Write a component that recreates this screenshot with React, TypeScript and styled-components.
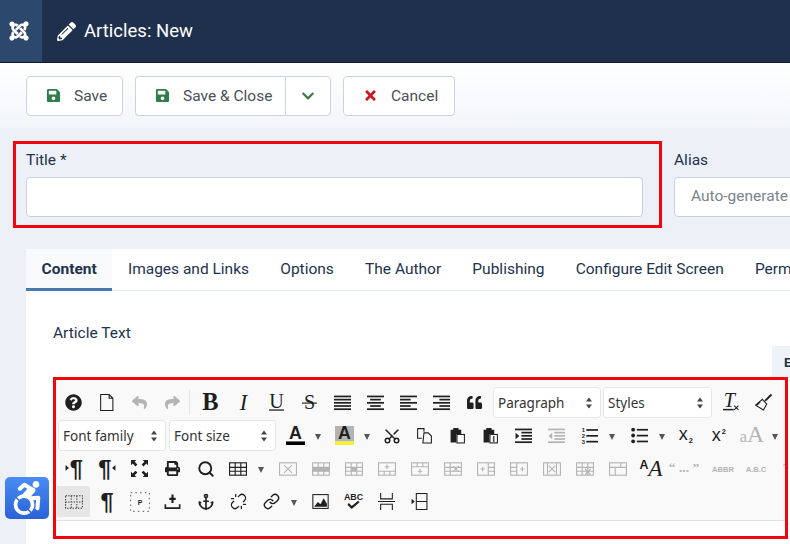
import React from 'react';
import styled, { createGlobalStyle } from 'styled-components';
import {
  FaJoomla, FaPencilAlt, FaSave, FaTimes, FaChevronDown, FaAccessibleIcon, FaQuestionCircle,
  FaReply, FaShare, FaQuoteLeft, FaPrint,
} from 'react-icons/fa';
import { Scissors, Search, Anchor, Link, Unlink } from 'lucide-react';

const Global = createGlobalStyle`
  html, body { margin: 0; padding: 0; background: #edf1f7; }
  * { box-sizing: border-box; }
  #root { width: 790px; height: 544px; overflow: hidden; position: relative; font-family: Roboto, "Liberation Sans", sans-serif; }
`;

const Page = styled.div`width: 790px; height: 544px; overflow: hidden; position: relative; background: #edf1f7;`;
const Header = styled.header`
  height: 63px; display: flex; align-items: stretch; background: #1f304c; border-bottom: 1px solid #0f1a2c;
`;
const LogoCell = styled.div`
  width: 42px; padding-right: 5px; background: #2c486c; display: flex; align-items: center; justify-content: center; color: #fff; font-size: 22px;
`;
const PageTitle = styled.h1`
  margin: 0 0 0 15px; display: flex; align-items: center; gap: 8px; color: #fff; font-size: 18.5px; font-weight: 400;
  svg { font-size: 19px; }
`;
const ActionBar = styled.div`
  height: 65px; padding: 13px 26px 12px; display: flex; gap: 12px;
  background: linear-gradient(#ffffff, #f2f5fa);
`;
const ActionButton = styled.button<{ $w: number }>`
  width: ${p => p.$w}px; height: 40px; padding: 0 0 1px; background: #fff; border: 1px solid #ccd3de; border-radius: 4px;
  display: flex; align-items: center; font: 400 15.5px Roboto, sans-serif; color: #495057;
`;
const ButtonIcon = styled.span<{ $color: string; $w: number }>`
  width: ${p => p.$w}px; padding-left: 19px; display: flex; color: ${p => p.$color}; font-size: 15px;
`;
const SplitGroup = styled.div`display: flex;`;
const MainPart = styled(ActionButton)`border-radius: 4px 0 0 4px; border-right: 0;`;
const CaretPart = styled(ActionButton)`
  border-radius: 0 4px 4px 0; justify-content: center; color: #3f7a4e; font-size: 14px;
`;
const Form = styled.main`padding: 13px 0 0 13px;`;
const FieldRow = styled.div`display: flex; align-items: flex-start; width: 1100px;`;
const TitleBox = styled.div`
  width: 649px; height: 87px; border: 3px solid #f0060c; padding: 7px 16px 8px 10px;
`;
const AliasBox = styled.div`width: 400px; margin-left: 12px; padding-top: 10px;`;
const FieldLabel = styled.label`
  display: block; height: 24px; margin-bottom: 2px; font-size: 15.5px; line-height: 19px; color: #22324e;
`;
const TextInput = styled.div`
  height: 40px; background: #fff; border: 1px solid #c5d0e2; border-radius: 4px; padding: 0 16px;
  font-size: 15.5px; line-height: 37px; color: #7b838b; white-space: nowrap;
`;
const Card = styled.section`margin: 21px 0 0 13px; width: 900px; background: #fff; height: 300px;`;
const Tabs = styled.nav`display: flex; height: 42px; border-bottom: 1px solid #e3e9f2;`;
const Tab = styled.div<{ $active?: boolean }>`
  padding: 0 15.6px; height: 42px; line-height: 41px; font-size: 15.5px; white-space: nowrap; color: #22324e;
  font-weight: ${p => (p.$active ? 700 : 400)};
  background: ${p => (p.$active ? '#f8fafc' : 'transparent')};
  border-bottom: ${p => (p.$active ? '3px solid #4a79af' : '0')};
`;
const EditorArea = styled.div`padding: 30px 0 0 27px;`;
const ArticleLabel = styled.div`height: 25px; font-size: 15.5px; line-height: 24px; color: #22324e;`;
const ToggleRow = styled.div`height: 31px; padding-left: 719px;`;
const ToggleTab = styled.div`
  width: 90px; height: 31px; background: #eef3f9; padding-left: 12px; font-size: 13px; font-weight: 700; line-height: 34px; color: #22324e;
`;
const Editor = styled.div`
  width: 735px; height: 162px; border: 3px solid #f0060c; background: #fff; overflow: hidden;
`;
const Toolbar = styled.div`
  height: 141px; padding: 6px 0 0 1px; background: #f9f9f9; border-bottom: 1px solid #e2e2e2; overflow: hidden;
`;
const Row = styled.div`display: flex; align-items: center; height: 33px; white-space: nowrap;`;
const Btn = styled.div<{ $w?: number; $off?: boolean; $active?: boolean; $mr?: number }>`
  flex: none; width: ${p => p.$w ?? 33}px; height: 31px; display: flex; align-items: center; justify-content: center;
  color: ${p => (p.$off ? '#b4b4b4' : '#1f1f1f')};
  background: ${p => (p.$active ? '#e6e6e6' : 'transparent')};
  margin-right: ${p => p.$mr ?? 0}px;
`;
const Caret = styled.div<{ $mr?: number }>`
  flex: none; width: 14px; display: flex; justify-content: center; margin-right: ${p => p.$mr ?? 0}px;
  &::after { content: ''; margin-top: 3px; border-left: 3.5px solid transparent; border-right: 3.5px solid transparent; border-top: 6px solid #555; }
`;
const Sep = styled.div`flex: none; width: 1px; height: 25px; background: #e6e6e6; margin: 0 4px 0 0;`;
const Select = styled.div<{ $w: number; $ml?: number; $mr?: number }>`
  flex: none; width: ${p => p.$w}px; height: 31px; background: #fff; border: 1px solid #e7e7e7; border-radius: 3px;
  margin-left: ${p => p.$ml ?? 0}px; margin-right: ${p => p.$mr ?? 0}px;
  display: flex; align-items: center; justify-content: space-between; padding: 0 7px 0 4px;
  font: 400 13.5px "Noto Sans", sans-serif; color: #333;
`;
const Svg = styled.svg<{ $s?: number }>`
  width: ${p => p.$s ?? 17}px; height: ${p => p.$s ?? 17}px; display: block; fill: currentColor; overflow: visible;
`;
const G = styled.text<{ $f?: string; $size: number; $bold?: boolean; $it?: boolean }>`
  font-family: ${p => p.$f ?? '"Liberation Serif"'}, serif;
  font-size: ${p => p.$size}px;
  font-weight: ${p => (p.$bold ? 700 : 400)};
  font-style: ${p => (p.$it ? 'italic' : 'normal')};
  fill: currentColor;
`;
const Ring = styled.rect`fill: none; stroke: currentColor; stroke-width: 1;`;
const Stroke = styled.path`fill: none; stroke: currentColor; stroke-width: 1;`;
const Thick = styled.path`fill: none; stroke: currentColor; stroke-width: 1.8;`;
const Dash = styled.path`fill: none; stroke: #333; stroke-width: 0.9; stroke-dasharray: 1.2 1.2;`;
const SparseDash = styled.path`fill: none; stroke: #777; stroke-width: 0.9; stroke-dasharray: 1.2 2.6;`;
const Wheel = styled.div`
  position: absolute; left: 5px; top: 477px; width: 44px; height: 42px; border-radius: 5px;
  background: linear-gradient(#4a8cf3, #2a62d8); color: #fff; display: flex; align-items: center; justify-content: center; font-size: 34px;
`;
const Rotated = styled.span<{ $deg: number }>`display: flex; transform: rotate(${p => p.$deg}deg);`;
const ArrowsIcon = styled.svg`width: 8px; height: 14px; display: block; fill: #444;`;

const SANS = '"Liberation Sans"';

const I: React.FC<{ children: React.ReactNode; s?: number }> = ({ children, s }) => (
  <Svg viewBox="0 0 16 16" $s={s}>{children}</Svg>
);
const Lines: React.FC<{ rows: [number, number][] }> = ({ rows }) => (
  <I>{rows.map(([x, w], i) => <rect key={i} x={x} y={1.5 + i * 3} width={w} height={1.6} />)}</I>
);
const NewDoc = () => <I><Stroke d="M2.5.5h8l3.5 3.5v11.5h-11.5z M10.5.5v3.5h3.5" /></I>;
const Txt: React.FC<{ t: string; size?: number; f?: string; bold?: boolean; it?: boolean; x?: number; y?: number }> = ({ t, size = 17, f, bold, it, x = 8, y = 14 }) => (
  <I><G x={x} y={y} textAnchor="middle" $size={size} $f={f} $bold={bold} $it={it}>{t}</G></I>
);
const Pil: React.FC<{ dir?: 'l' | 'r' | 'n' }> = ({ dir = 'n' }) => (
  <I s={18}>
    <G x={dir === 'l' ? 10 : dir === 'r' ? 6 : 8} y={15} textAnchor="middle" $size={21} $f={SANS} $bold>¶</G>
    {dir === 'l' && <path d="M.5 4.500l3 2.500-3 2.500z" />}
    {dir === 'r' && <path d="M15.500 4.500l-3 2.500 3 2.500z" />}
  </I>
);
const Tbl: React.FC<{ children?: React.ReactNode; plain?: boolean }> = ({ children, plain }) => (
  <I s={18}>
    <Ring x={0.5} y={2.5} width={15} height={11} />
    {plain && <Stroke d="M5.5 2.5v11 M10.5 2.5v11 M.5 6.5h15 M.5 10h15" />}
    {children}
  </I>
);
const X: React.FC<{ cx: number; cy: number; r?: number }> = ({ cx, cy, r = 2.5 }) => (
  <Stroke d={`M${cx - r} ${cy - r}l${2 * r} ${2 * r} M${cx + r} ${cy - r}l${-2 * r} ${2 * r}`} />
);
const Plus: React.FC<{ cx: number; cy: number }> = ({ cx, cy }) => (
  <Stroke d={`M${cx - 2} ${cy}h4 M${cx} ${cy - 2}v4`} />
);
const Clip: React.FC<{ children?: React.ReactNode }> = ({ children }) => (
  <I>
    <path d="M1.500 2.500h2.500v-1.500h5v1.500h2.500v4h-4.500v8h-5.500z" />
    <rect x={7.5} y={7} width={7} height={8} fill="#fff" stroke="currentColor" strokeWidth={1} />
    {children}
  </I>
);
const UpDown = () => (
  <ArrowsIcon viewBox="0 0 8 14"><path d="M4 1.500L7 5.500H1z M4 12.500L1 8.500h6z" /></ArrowsIcon>
);

export default function App() {
  return (
    <Page>
      <Global />
      <Header>
        <LogoCell><FaJoomla /></LogoCell>
        <PageTitle><FaPencilAlt />Articles: New</PageTitle>
      </Header>
      <ActionBar>
        <ActionButton $w={97}><ButtonIcon $color="#2f7d48" $w={47}><FaSave /></ButtonIcon>Save</ActionButton>
        <SplitGroup>
          <MainPart $w={150}><ButtonIcon $color="#2f7d48" $w={47}><FaSave /></ButtonIcon>Save &amp; Close</MainPart>
          <CaretPart $w={46}><FaChevronDown /></CaretPart>
        </SplitGroup>
        <ActionButton $w={112}><ButtonIcon $color="#c8171d" $w={47}><FaTimes /></ButtonIcon>Cancel</ActionButton>
      </ActionBar>
      <Form>
        <FieldRow>
          <TitleBox>
            <FieldLabel>Title *</FieldLabel>
            <TextInput />
          </TitleBox>
          <AliasBox>
            <FieldLabel>Alias</FieldLabel>
            <TextInput>Auto-generate from title</TextInput>
          </AliasBox>
        </FieldRow>
        <Card>
          <Tabs>
            <Tab $active>Content</Tab>
            <Tab>Images and Links</Tab>
            <Tab>Options</Tab>
            <Tab>The Author</Tab>
            <Tab>Publishing</Tab>
            <Tab>Configure Edit Screen</Tab>
            <Tab>Permissions</Tab>
          </Tabs>
          <EditorArea>
            <ArticleLabel>Article Text</ArticleLabel>
            <ToggleRow><ToggleTab>Editor</ToggleTab></ToggleRow>
            <Editor>
              <Toolbar>
                <Row>
                  <Btn><FaQuestionCircle size={17} /></Btn>
                  <Btn><NewDoc /></Btn>
                  <Btn $off><FaReply size={15} /></Btn>
                  <Btn $off><FaShare size={15} /></Btn>
                  <Sep />
                  <Btn><Txt t="B" size={23} bold y={15} /></Btn>
                  <Btn><Txt t="I" size={21} it y={15} /></Btn>
                  <Btn><I><G x={8} y={13} textAnchor="middle" $size={19}>U</G><rect x={1} y={14.5} width={14} height={1.2} /></I></Btn>
                  <Btn><I><G x={8} y={14} textAnchor="middle" $size={19}>S</G><rect x={1} y={8} width={14} height={1.1} /></I></Btn>
                  <Btn><Lines rows={[[0, 16], [0, 16], [0, 16], [0, 16], [0, 16]]} /></Btn>
                  <Btn><Lines rows={[[0, 16], [3, 10], [0, 16], [3, 10], [0, 16]]} /></Btn>
                  <Btn><Lines rows={[[0, 16], [0, 10], [0, 16], [0, 10], [0, 16]]} /></Btn>
                  <Btn><Lines rows={[[0, 16], [6, 10], [0, 16], [6, 10], [0, 16]]} /></Btn>
                  <Btn $mr={2}><FaQuoteLeft size={15} /></Btn>
                  <Select $w={108} $mr={2}>Paragraph<UpDown /></Select>
                  <Select $w={109} $mr={2}>Styles<UpDown /></Select>
                  <Btn><I><G x={7} y={12.500} textAnchor="middle" $size={19} $it>T</G><rect x={1} y={14} width={10} height={1.400} /><X cx={13.500} cy={13} r={2} /></I></Btn>
                  <Btn><I><Thick d="M15.500 .5l-6 6" /><Stroke d="M7 5l4 4.500-3 5.500-7.500-4.500z M5 7.500l-3 3" /></I></Btn>
                </Row>
                <Row>
                  <Select $w={108} $ml={1} $mr={3}>Font family<UpDown /></Select>
                  <Select $w={107} $mr={3}>Font size<UpDown /></Select>
                  <Btn $w={32}>
                    <I s={19}><G x={8} y={11} textAnchor="middle" $size={15} $f={SANS} $bold>A</G><rect x={0} y={13} width={16} height={3} fill="#000" /></I>
                  </Btn>
                  <Caret $mr={3} />
                  <Btn $w={32}>
                    <I s={19}><rect x={0} y={0} width={16} height={13} fill="#b4b4b4" /><G x={8} y={11} textAnchor="middle" $size={15} $f={SANS} $bold>A</G><rect x={0} y={13} width={16} height={3} fill="#f5f030" /></I>
                  </Btn>
                  <Caret $mr={1} />
                  <Btn><Rotated $deg={-90}><Scissors size={18} strokeWidth={2} /></Rotated></Btn>
                  <Btn><I><Stroke d="M1.500 1.500h6v3 M1.500 1.500v9h4 M7.500 5.500h4l3 3v6.500h-8z" /></I></Btn>
                  <Btn><Clip /></Btn>
                  <Btn><Clip><G x={11} y={14} textAnchor="middle" $size={8} $f={SANS} $bold>I</G></Clip></Btn>
                  <Btn><I><rect x={0} y={1.500} width={16} height={1.600} /><rect x={6} y={4.500} width={10} height={1.600} /><rect x={6} y={7.500} width={10} height={1.600} /><rect x={6} y={10.500} width={10} height={1.600} /><rect x={0} y={13.500} width={16} height={1.600} /><path d="M.5 5.500l3.500 3-3.500 3z" /></I></Btn>
                  <Btn $off><I><rect x={0} y={1.500} width={16} height={1.600} /><rect x={6} y={4.500} width={10} height={1.600} /><rect x={6} y={7.500} width={10} height={1.600} /><rect x={6} y={10.500} width={10} height={1.600} /><rect x={0} y={13.500} width={16} height={1.600} /><path d="M4 5.500l-3.500 3 3.500 3z" /></I></Btn>
                  <Btn $w={32}><I><G x={2.200} y={5} textAnchor="middle" $size={5.500} $f={SANS} $bold>1</G><G x={2.200} y={10.500} textAnchor="middle" $size={5.500} $f={SANS} $bold>2</G><G x={2.200} y={16} textAnchor="middle" $size={5.500} $f={SANS} $bold>3</G><rect x={5} y={2} width={11} height={1.600} /><rect x={5} y={7.500} width={11} height={1.600} /><rect x={5} y={13} width={11} height={1.600} /></I></Btn>
                  <Caret $mr={4} />
                  <Btn $w={32}><I><circle cx={2} cy={2.500} r={1.800} /><circle cx={2} cy={8} r={1.800} /><circle cx={2} cy={13.500} r={1.800} /><rect x={5.500} y={1.800} width={10.500} height={1.600} /><rect x={5.500} y={7.300} width={10.500} height={1.600} /><rect x={5.500} y={12.800} width={10.500} height={1.600} /></I></Btn>
                  <Caret />
                  <Btn><I><G x={6} y={12.500} textAnchor="middle" $size={17} $f={SANS}>x</G><G x={13} y={15.500} textAnchor="middle" $size={7} $f={SANS} $bold>2</G></I></Btn>
                  <Btn><I><G x={6} y={13} textAnchor="middle" $size={17} $f={SANS}>x</G><G x={13} y={7} textAnchor="middle" $size={7} $f={SANS} $bold>2</G></I></Btn>
                  <Btn $off><I s={20}><G x={8} y={13} textAnchor="middle" $size={19}><tspan fontSize={13}>a</tspan>A</G></I></Btn>
                  <Caret />
                </Row>
                <Row>
                  <Btn><Pil dir="l" /></Btn>
                  <Btn><Pil dir="r" /></Btn>
                  <Btn><I><path d="M0 0h5L3.400 1.600 6 4.200 4.200 6 1.600 3.400 0 5z M16 0v5l-1.600-1.600L11.800 6 10 4.200l2.600-2.600L11 0z M0 16v-5l1.600 1.600L4.200 10 6 11.800l-2.600 2.600L5 16z M16 16h-5l1.600-1.600L10 11.800l1.800-1.800 2.600 2.600L16 11z" /></I></Btn>
                  <Btn><FaPrint size={15} /></Btn>
                  <Btn><Search size={18} strokeWidth={2.5} /></Btn>
                  <Btn $w={32}><Tbl plain /></Btn>
                  <Caret $mr={3} />
                  <Btn $off><Tbl><X cx={8} cy={8} r={3.500} /></Tbl></Btn>
                  <Btn $off><Tbl plain><rect x={0.5} y={6.500} width={15} height={3.500} /></Tbl></Btn>
                  <Btn $off><Tbl plain><rect x={5.500} y={6.500} width={5} height={3.500} /></Tbl></Btn>
                  <Btn $off><Tbl><Stroke d="M.5 10h15 M5.500 10v3.500 M10.500 10v3.500" /><Plus cx={8} cy={6} /></Tbl></Btn>
                  <Btn $off><Tbl><Stroke d="M.5 6h15 M5.500 2.500V6 M10.500 2.500V6" /><Plus cx={8} cy={10} /></Tbl></Btn>
                  <Btn $off><Tbl><Stroke d="M.5 6.500h15 M.5 10h15 M5.500 2.500v11" /><X cx={10.500} cy={8} r={2.500} /></Tbl></Btn>
                  <Btn $off><Tbl><Stroke d="M10 2.500v11 M10 6.500h5.500 M10 10h5.500" /><Plus cx={5} cy={8} /></Tbl></Btn>
                  <Btn $off><Tbl><Stroke d="M6 2.500v11 M.5 6.500H6 M.5 10H6" /><Plus cx={11} cy={8} /></Tbl></Btn>
                  <Btn $off><Tbl><Stroke d="M4 2.500v11 M12 2.500v11" /><X cx={8} cy={8} r={2.800} /></Tbl></Btn>
                  <Btn $off><Tbl plain><X cx={10.500} cy={10.500} r={2.500} /></Tbl></Btn>
                  <Btn $off><Tbl><Stroke d="M.5 6.500h15 M5.500 6.500v7 M10.500 2.500v4" /></Tbl></Btn>
                  <Btn><I s={22}><G x={8} y={13} textAnchor="middle" $size={17} $it><tspan fontSize={9} fontStyle="normal" fontWeight={700} fontFamily={SANS} dy={-5}>A</tspan><tspan dy={5}>A</tspan></G></I></Btn>
                  <Btn $off $mr={6}><I s={24}><G x={8} y={10} textAnchor="middle" $size={9} $bold>“ ... ”</G></I></Btn>
                  <Btn $off><I s={22}><G x={8} y={10.500} textAnchor="middle" $size={5.500} $f={SANS} $bold>ABBR</G></I></Btn>
                  <Btn $off><I s={22}><G x={8} y={10.500} textAnchor="middle" $size={5.500} $f={SANS} $bold>A.B.C</G></I></Btn>
                  <Btn $off><Txt t="T" size={16} /></Btn>
                </Row>
                <Row>
                  <Btn $active><I s={18}><Dash d="M.5 2.500h15v11H.5z M5.500 2.500v11 M10.500 2.500v11 M.5 8h15" /></I></Btn>
                  <Btn><Pil /></Btn>
                  <Btn><I s={20}><SparseDash d="M.5 .5h15v15H.5z" /><G x={8} y={10.500} textAnchor="middle" $size={5.500} $f={SANS} $bold>P</G></I></Btn>
                  <Btn><I><path d="M7 4.500H5v2h2v3h2v-3h2v-2H9v-3H7z" /><path d="M.5 10.500H2v3h12v-3h1.500V15H.5z" /></I></Btn>
                  <Btn><Anchor size={18} strokeWidth={2.2} /></Btn>
                  <Btn><Unlink size={17} strokeWidth={1.8} /></Btn>
                  <Btn $w={32}><Link size={17} strokeWidth={2} /></Btn>
                  <Caret $mr={3} />
                  <Btn><I><Ring x={0.8} y={1.500} width={14.400} height={13} strokeWidth={1.200} /><path d="M2 13l3.500-4.500 2.500 2 3-5.500 3 5v3z" /></I></Btn>
                  <Btn><I s={19}><G x={8} y={6.500} textAnchor="middle" $size={7.500} $f={SANS} $bold>ABC</G><Thick d="M3.500 10l3 3 6-5" /></I></Btn>
                  <Btn><I><Stroke d="M2.500 0v5.500h11V0 M2.500 16v-5.500h11V16 M0 8h16" /></I></Btn>
                  <Btn><I><path d="M.5 5.500l3 2.500-3 2.500z" /><Stroke d="M5 .5h10v15H5z" /><Stroke d="M5 8h10" /></I></Btn>
                </Row>
              </Toolbar>
            </Editor>
          </EditorArea>
        </Card>
      </Form>
      <Wheel><FaAccessibleIcon /></Wheel>
    </Page>
  );
}
